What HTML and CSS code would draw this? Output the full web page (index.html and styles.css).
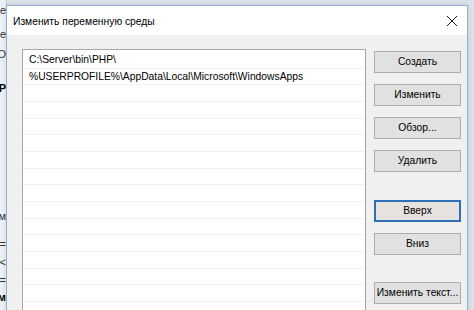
FILE: index.html
```html
<!DOCTYPE html>
<html lang="ru">
<head>
<meta charset="utf-8">
<title>Изменить переменную среды</title>
<link rel="stylesheet" href="styles.css">
</head>
<body>
<div class="desktop">
  <div class="bgwin">
    <div class="bgline l1"><span>Сведе</span></div>
    <div class="bgline l2"><span>Пере</span></div>
    <div class="bgline l3"><span>ТО</span></div>
    <div class="bgline l4 bold"><span>Р</span></div>
    <div class="bgline l5"><span>м</span></div>
    <div class="bgline l6"><span>=</span></div>
    <div class="bgline l7"><span>&lt;</span></div>
    <div class="bgline l8"><span>=</span></div>
    <div class="bgline l9 bold"><span>м</span></div>
  </div>

  <div class="dialog">
    <div class="titlebar">
      <span class="title">Изменить переменную среды</span>
      <svg class="close" width="12" height="12" viewBox="0 0 12 12" aria-hidden="true">
        <path d="M1 1 L11 11 M11 1 L1 11" stroke="#1a1a1a" stroke-width="1" fill="none"/>
      </svg>
    </div>
    <div class="content">
      <div class="listbox">
        <div class="row">C:\Server\bin\PHP\</div>
        <div class="row">%USERPROFILE%\AppData\Local\Microsoft\WindowsApps</div>
        <div class="row"></div>
        <div class="row"></div>
        <div class="row"></div>
        <div class="row"></div>
        <div class="row"></div>
        <div class="row"></div>
        <div class="row"></div>
        <div class="row"></div>
        <div class="row"></div>
        <div class="row"></div>
        <div class="row"></div>
        <div class="row"></div>
        <div class="row"></div>
        <div class="row"></div>
      </div>
      <div class="buttons">
        <button class="btn">Создать</button>
        <button class="btn">Изменить</button>
        <button class="btn">Обзор...</button>
        <button class="btn">Удалить</button>
        <button class="btn focus gap-big">Вверх</button>
        <button class="btn">Вниз</button>
        <button class="btn gap-big2">Изменить текст...</button>
      </div>
    </div>
  </div>
</div>
</body>
</html>
```
FILE: styles.css
```css
* { box-sizing: border-box; }
html, body {
  margin: 0;
  padding: 0;
}
body {
  width: 474px;
  height: 310px;
  overflow: hidden;
  background: #e6eaef;
  font-family: "Liberation Sans", Arial, sans-serif;
  font-size: 10.3px;
  color: #000;
}
.desktop {
  position: relative;
  width: 474px;
  height: 310px;
  overflow: hidden;
  background: #dde3ea;
}
.bgwin {
  width: 7px;
  height: 310px;
  overflow: hidden;
  background: #eef1f5;
  border-right: 1px solid #bcc9d8;
  display: flex;
  flex-direction: column;
}
.bgline {
  display: flex;
  justify-content: flex-end;
  white-space: nowrap;
  font-size: 11px;
  line-height: 14px;
  color: #333;
}
.bgline.bold { font-weight: 700; color: #000; }
.l1 { margin-top: 3px; }
.l2 { margin-top: 10px; }
.l3 { margin-top: 6px; }
.l4 { margin-top: 20px; }
.l5 { margin-top: 114px; }
.l6 { margin-top: 14px; }
.l7 { margin-top: 4px; }
.l8 { margin-top: 4px; }
.l9 { margin-top: 3px; }

.dialog {
  position: absolute;
  left: 6px;
  top: 5px;
  width: 462px;
  height: 330px;
  border: 1px solid #8fb0d4;
  background: #f0f0f0;
  display: flex;
  flex-direction: column;
  box-shadow: 0 0 6px rgba(0,0,0,0.12);
}
.titlebar {
  height: 29px;
  background: #fff;
  display: flex;
  align-items: center;
  justify-content: space-between;
  padding: 0 9px 0 6px;
  flex: none;
}
.title {
  font-size: 10.3px;
  color: #000;
  margin-top: 2px;
}
.close {
  display: block;
  margin-top: 1px;
}
.content {
  flex: 1;
  display: flex;
  align-items: flex-start;
  padding: 14px 6px 0 15px;
  gap: 8px;
}
.listbox {
  width: 344px;
  height: 300px;
  background: #fff;
  border: 1px solid #a8a8a8;
  padding: 2px 0 0 0;
  flex: none;
}
.row {
  height: 16.67px;
  line-height: 15.5px;
  padding-left: 6px;
  border-bottom: 1px solid #f2f2f2;
  white-space: nowrap;
  font-size: 10.3px;
}
.buttons {
  width: 87px;
  display: flex;
  flex-direction: column;
  gap: 11px;
  margin-top: 2px;
  flex: none;
}
.btn {
  height: 22px;
  width: 87px;
  border: 1px solid #adadad;
  background: #e1e1e1;
  font-family: inherit;
  font-size: 10.3px;
  color: #000;
  padding: 0;
  line-height: 18px;
  white-space: nowrap;
}
.btn.focus {
  border: 2px solid #2f6fb5;
  background: #e6e2df;
}
.gap-big { margin-top: 17px; }
.gap-big2 { margin-top: 16px; }
```
